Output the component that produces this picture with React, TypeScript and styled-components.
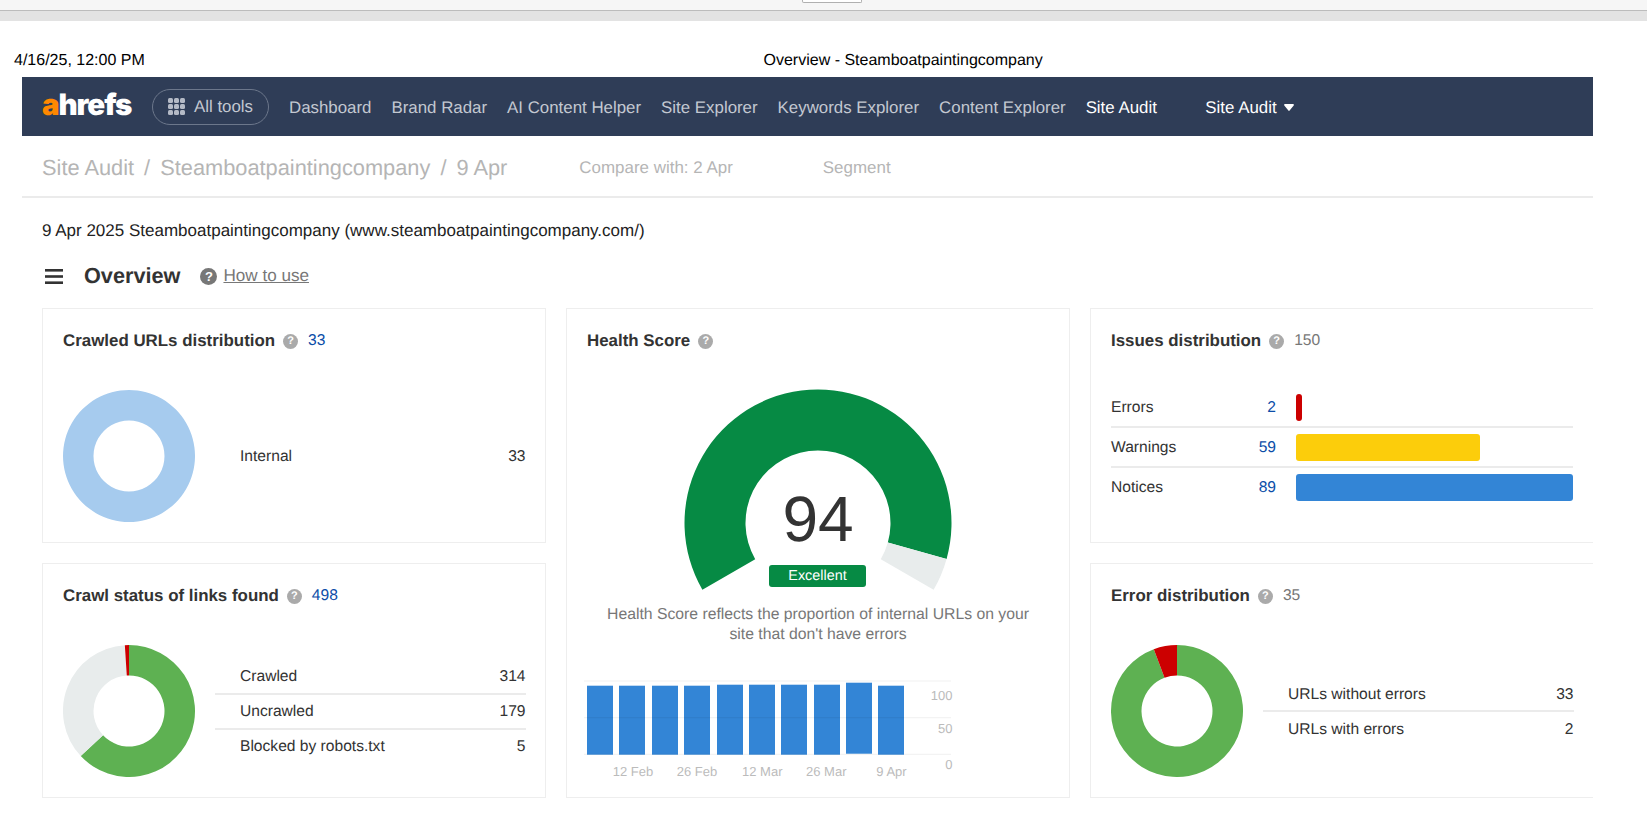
import React from "react";
import styled, { createGlobalStyle } from "styled-components";

const Global = createGlobalStyle`
  html, body { margin: 0; padding: 0; background: #fff; height: 823px; overflow: hidden; }
  body { font-family: "Liberation Sans", Arial, sans-serif; color: #333; text-rendering: geometricPrecision; }
  * { box-sizing: border-box; }
`;

const BrowserBar = styled.div`
  height: 11px; background: #f6f6f6; border-bottom: 1px solid #bcbcbc; padding-left: 802px;
`;
const BarButton = styled.div`
  width: 60px; height: 3px; background: #fff; border: 1px solid #b0b0b0; border-top: 0; border-radius: 0 0 2px 2px;
`;
const GreyStrip = styled.div`height: 10px; background: #e3e3e3;`;
const PrintHeader = styled.div`
  height: 56px; padding: 30px 0 0 14px; display: flex; font-size: 16px; line-height: 20px; color: #000;
`;
const PrintDate = styled.span`width: 749.5px;`;

const Sheet = styled.div`margin-left: 22px; width: 1571px; overflow: hidden;`;

const Nav = styled.nav`
  height: 59px; background: #2f3d57; display: flex; align-items: center; padding-left: 20px;
  font-size: 16.88px; color: #c3c8d1;
`;
const Logo = styled.div`
  font-family: Inter, sans-serif; font-weight: 900; font-size: 29.5px; letter-spacing: -1.1px; color: #fff;
  width: 90px; margin-right: 20px; line-height: 30px; margin-top: -3px; white-space: nowrap;
  span { color: #f80; }
`;
const ToolsPill = styled.div`
  width: 117px; height: 36px; border: 1px solid #6c778b; border-radius: 18px; display: flex; align-items: center;
  padding-left: 15px; gap: 9px; margin-right: 20px;
`;
const NavLink = styled.span<{ $active?: boolean }>`
  margin-right: 20px; white-space: nowrap; padding-top: 2px; color: ${p => (p.$active ? "#fff" : "#c3c8d1")};
`;
const NavDrop = styled.span`
  margin-left: 28.5px; color: #fff; display: flex; align-items: center; gap: 7px; white-space: nowrap; padding-top: 2px;
`;

const SubBar = styled.div`
  height: 62px; border-bottom: 2px solid #ebebeb; display: flex; align-items: center; padding: 3px 0 0 20px;
  color: #b5b5b5;
`;
const Crumb = styled.span`font-size: 21.8px; white-space: nowrap;`;
const CrumbSep = styled.span`font-size: 21.8px; margin: 0 10px;`;
const SubLink = styled.span<{ $gap: number }>`
  font-size: 16.95px; margin-left: ${p => p.$gap}px; white-space: nowrap;
`;

const Content = styled.div`padding: 23px 0 0 20px;`;
const DateLine = styled.div`font-size: 17px; line-height: 20px; color: #222;`;
const OverviewRow = styled.div`
  display: flex; align-items: center; height: 30px; margin-top: 20px; color: #333;
`;
const OverviewTitle = styled.h1`
  margin: 0 20px 0 21px; font-size: 21.7px; font-weight: 700; line-height: 30px;
`;
const HowTo = styled.a`
  margin-left: 6px; font-size: 17.1px; color: #777; text-decoration: underline;
`;
const Grid = styled.div`
  margin-top: 17px; display: grid; grid-template-columns: 504px 504px 504px; grid-template-rows: 235px 235px; gap: 20px;
`;
const Card = styled.section<{ $tall?: boolean }>`
  border: 1px solid #eeeeee; padding: 21px 20px 20px; ${p => (p.$tall ? "grid-row: span 2;" : "")}
`;
const CardHead = styled.div`display: flex; align-items: center; height: 22px;`;
const CardTitle = styled.h2`
  margin: 0; font-size: 16.9px; font-weight: 700; line-height: 22px; color: #333; white-space: nowrap;
`;
const Help = styled.span<{ $size?: number; $dark?: boolean }>`
  width: ${p => p.$size ?? 15}px; height: ${p => p.$size ?? 15}px; border-radius: 50%;
  background: ${p => (p.$dark ? "#777" : "#aaa")}; color: #fff; font-weight: 700;
  font-size: ${p => (p.$size ? 13 : 11)}px; display: inline-flex; align-items: center; justify-content: center;
  flex: none;
`;
const CardHelp = styled(Help)`margin: 0 10px 0 8px;`;
const Count = styled.span<{ $link?: boolean }>`
  font-size: 15.6px; color: ${p => (p.$link ? "#0b4da8" : "#777")};
`;

const PieBody = styled.div`display: flex; align-items: center; margin-top: 38px;`;
const Rows = styled.div`margin: 2px -0.5px 0 20px; flex: 1;`;
const LegendRow = styled.div`
  height: 35px; display: flex; justify-content: space-between; align-items: center; padding: 2px 0 0 25px;
  font-size: 15.6px; color: #333; border-bottom: 2px solid #ebebeb;
  &:last-child { border-bottom: 0; padding-top: 0; }
`;
const IssueList = styled.div`margin-top: 36px;`;
const IssueRow = styled.div`
  height: 40px; display: flex; align-items: center; padding-top: 2px; border-bottom: 2px solid #ebebeb; font-size: 15.6px;
  &:last-child { border-bottom: 0; padding-top: 0; }
`;
const IssueLabel = styled.span`width: 115px;`;
const IssueValue = styled.span`width: 50px; text-align: right; color: #0b4da8; margin-right: 20px;`;
const Track = styled.div`flex: 1;`;
const Bar = styled.div<{ $color: string }>`height: 27px; margin-top: -2px; border-radius: 3px; background: ${p => p.$color};`;

const GaugeWrap = styled.div`position: relative; width: 268px; height: 216px; margin: 37px auto 0;`;
const Score = styled.div`
  position: absolute; left: 0; right: 0; top: 93px; text-align: center; font-size: 64px; line-height: 74px; color: #333;
`;
const Badge = styled.div`
  position: absolute; left: 85px; top: 176px; width: 97px; height: 22px; border-radius: 3px; background: #068a44;
  color: #fff; font-size: 14.4px; line-height: 22px; text-align: center;
`;
const Description = styled.p`
  margin: 0 -4px; font-size: 15.75px; line-height: 20px; color: #777; text-align: center;
`;
const ChartBox = styled.div`margin: 34px 0 0 -3px;`;

const polar = (cx: number, cy: number, r: number, deg: number) => {
  const a = ((deg - 90) * Math.PI) / 180;
  return [cx + r * Math.cos(a), cy + r * Math.sin(a)];
};
const arc = (cx: number, cy: number, R: number, r: number, from: number, to: number) => {
  const large = to - from > 180 ? 1 : 0;
  const [a, b] = polar(cx, cy, R, from);
  const [c, d] = polar(cx, cy, R, to);
  const [e, f] = polar(cx, cy, r, to);
  const [g, h] = polar(cx, cy, r, from);
  return `M${a} ${b}A${R} ${R} 0 ${large} 1 ${c} ${d}L${e} ${f}A${r} ${r} 0 ${large} 0 ${g} ${h}Z`;
};

const Donut = ({ parts }: { parts: { v: number; c: string }[] }) => {
  const total = parts.reduce((s, p) => s + p.v, 0);
  let at = 0;
  return (
    <svg width="132" height="132" viewBox="0 0 132 132" style={{ flex: "none" }}>
      {parts.map((p, i) => {
        const from = at;
        at += (p.v / total) * 360;
        return p.v === total ? (
          <path key={i} fillRule="evenodd" fill={p.c}
            d="M66 0a66 66 0 1 0 .01 0ZM66 30.5a35.5 35.5 0 1 1-.01 0Z" />
        ) : (
          <path key={i} d={arc(66, 66, 66, 35.5, from, at)} fill={p.c} />
        );
      })}
    </svg>
  );
};

const Gauge = () => (
  <svg width="268" height="210" viewBox="0 0 268 210">
    <path d={arc(134, 134, 133.5, 72.5, -120, 105.6)} fill="#068a44" />
    <path d={arc(134, 134, 133.5, 72.5, 105.6, 120)} fill="#e8ecec" />
  </svg>
);

const bars = [
  [3, 6.7], [35, 6.7], [68, 6.7], [100, 6.7], [133, 5.7], [165, 5.7], [197, 5.7], [230, 5.7], [262, 3.7, 74.7], [294, 6.7],
];
const Chart = () => (
  <svg width="372" height="100" viewBox="0 0 372 100" fontFamily="'Liberation Sans', Arial, sans-serif" fontSize="13" fill="#bbb">
    {bars.map(([x, y, b], i) => (
      <rect key={i} x={x} y={y} width="26" height={(b ?? 75.7) - y} fill="#3385d6" />
    ))}
    {[2, 38.7, 75.3].map(y => (
      <rect key={y} x="0" y={y - 0.5} width="367" height="1" fill="rgba(0,0,0,0.06)" />
    ))}
    {[["100", 21], ["50", 54], ["0", 90]].map(([t, y]) => (
      <text key={t} x="368.5" y={y} textAnchor="end">{t}</text>
    ))}
    {[["12 Feb", 28.7], ["26 Feb", 92.7], ["12 Mar", 158], ["26 Mar", 222], ["9 Apr", 292.3]].map(([t, x]) => (
      <text key={t} x={x} y="97">{t}</text>
    ))}
  </svg>
);

const Dots = () => (
  <svg width="17" height="17" viewBox="0 0 17 17" fill="#b4bac6" style={{ flex: "none" }}>
    {[0, 6, 12].flatMap(y =>
      [0, 6, 12].map(x => <rect key={`${x}-${y}`} x={x} y={y} width="5" height="5" rx="1.5" />)
    )}
  </svg>
);

const Caret = () => (
  <svg width="10" height="7" viewBox="0 0 10 7" fill="#fff">
    <path d="M1 0h8c.8 0 1.2.8.7 1.4L5.6 6.6c-.3.4-.9.4-1.2 0L.3 1.4C-.2.8.2 0 1 0Z" />
  </svg>
);

const Burger = () => (
  <svg width="18" height="15" viewBox="0 0 18 15" fill="#333" style={{ marginLeft: 3, flex: "none" }}>
    <rect width="18" height="2.6" />
    <rect y="6.2" width="18" height="2.6" />
    <rect y="12.4" width="18" height="2.6" />
  </svg>
);

const GREEN = "#5eb152";
const GREY = "#e8ecec";
const RED = "#cc0000";

export default function App() {
  return (
    <>
      <Global />
      <BrowserBar><BarButton /></BrowserBar>
      <GreyStrip />
      <PrintHeader>
        <PrintDate>4/16/25, 12:00 PM</PrintDate>
        <span>Overview - Steamboatpaintingcompany</span>
      </PrintHeader>
      <Sheet>
        <Nav>
          <Logo><span>a</span>hrefs</Logo>
          <ToolsPill><Dots />All tools</ToolsPill>
          <NavLink>Dashboard</NavLink>
          <NavLink>Brand Radar</NavLink>
          <NavLink>AI Content Helper</NavLink>
          <NavLink>Site Explorer</NavLink>
          <NavLink>Keywords Explorer</NavLink>
          <NavLink>Content Explorer</NavLink>
          <NavLink $active>Site Audit</NavLink>
          <NavDrop>Site Audit <Caret /></NavDrop>
        </Nav>
        <SubBar>
          <Crumb>Site Audit</Crumb>
          <CrumbSep>/</CrumbSep>
          <Crumb>Steamboatpaintingcompany</Crumb>
          <CrumbSep>/</CrumbSep>
          <Crumb>9 Apr</Crumb>
          <SubLink $gap={72}>Compare with: 2 Apr</SubLink>
          <SubLink $gap={90}>Segment</SubLink>
        </SubBar>
        <Content>
          <DateLine>9 Apr 2025 Steamboatpaintingcompany (www.steamboatpaintingcompany.com/)</DateLine>
          <OverviewRow>
            <Burger />
            <OverviewTitle>Overview</OverviewTitle>
            <Help $size={17} $dark>?</Help>
            <HowTo>How to use</HowTo>
          </OverviewRow>
          <Grid>
            <Card>
              <CardHead>
                <CardTitle>Crawled URLs distribution</CardTitle>
                <CardHelp>?</CardHelp>
                <Count $link>33</Count>
              </CardHead>
              <PieBody>
                <Donut parts={[{ v: 33, c: "#a6cbee" }]} />
                <Rows>
                  <LegendRow><span>Internal</span><span>33</span></LegendRow>
                </Rows>
              </PieBody>
            </Card>
            <Card $tall>
              <CardHead>
                <CardTitle>Health Score</CardTitle>
                <CardHelp>?</CardHelp>
              </CardHead>
              <GaugeWrap>
                <Gauge />
                <Score>94</Score>
                <Badge>Excellent</Badge>
              </GaugeWrap>
              <Description>
                Health Score reflects the proportion of internal URLs on your<br />
                site that don't have errors
              </Description>
              <ChartBox><Chart /></ChartBox>
            </Card>
            <Card>
              <CardHead>
                <CardTitle>Issues distribution</CardTitle>
                <CardHelp>?</CardHelp>
                <Count>150</Count>
              </CardHead>
              <IssueList>
                <IssueRow>
                  <IssueLabel>Errors</IssueLabel><IssueValue>2</IssueValue>
                  <Track><Bar $color={RED} style={{ width: `${(2 / 89) * 100}%` }} /></Track>
                </IssueRow>
                <IssueRow>
                  <IssueLabel>Warnings</IssueLabel><IssueValue>59</IssueValue>
                  <Track><Bar $color="#fccd0b" style={{ width: `${(59 / 89) * 100}%` }} /></Track>
                </IssueRow>
                <IssueRow>
                  <IssueLabel>Notices</IssueLabel><IssueValue>89</IssueValue>
                  <Track><Bar $color="#3385d6" style={{ width: "100%" }} /></Track>
                </IssueRow>
              </IssueList>
            </Card>
            <Card>
              <CardHead>
                <CardTitle>Crawl status of links found</CardTitle>
                <CardHelp>?</CardHelp>
                <Count $link>498</Count>
              </CardHead>
              <PieBody>
                <Donut parts={[{ v: 314, c: GREEN }, { v: 179, c: GREY }, { v: 5, c: RED }]} />
                <Rows>
                  <LegendRow><span>Crawled</span><span>314</span></LegendRow>
                  <LegendRow><span>Uncrawled</span><span>179</span></LegendRow>
                  <LegendRow><span>Blocked by robots.txt</span><span>5</span></LegendRow>
                </Rows>
              </PieBody>
            </Card>
            <Card>
              <CardHead>
                <CardTitle>Error distribution</CardTitle>
                <CardHelp>?</CardHelp>
                <Count>35</Count>
              </CardHead>
              <PieBody>
                <Donut parts={[{ v: 33, c: GREEN }, { v: 2, c: RED }]} />
                <Rows>
                  <LegendRow><span>URLs without errors</span><span>33</span></LegendRow>
                  <LegendRow><span>URLs with errors</span><span>2</span></LegendRow>
                </Rows>
              </PieBody>
            </Card>
          </Grid>
        </Content>
      </Sheet>
    </>
  );
}
